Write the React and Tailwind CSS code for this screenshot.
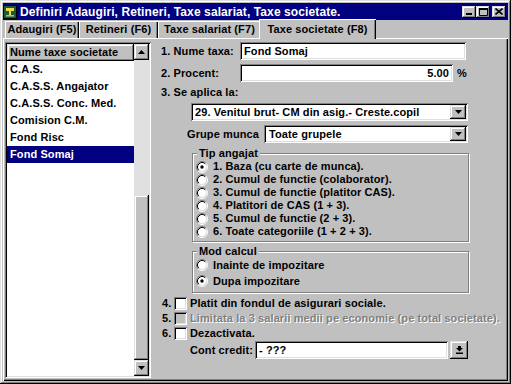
import React from 'react';

// Win95-style bevels
const raised = 'shadow-[inset_-1px_-1px_0_#000,inset_1px_1px_0_#dfdfdf,inset_-2px_-2px_0_#808080,inset_2px_2px_0_#fff]';
const sunken = 'shadow-[inset_1px_1px_0_#808080,inset_-1px_-1px_0_#fff,inset_2px_2px_0_#000,inset_-2px_-2px_0_#dfdfdf]';

const items = ['C.A.S.', 'C.A.S.S. Angajator', 'C.A.S.S. Conc. Med.', 'Comision C.M.', 'Fond Risc', 'Fond Somaj'];

const tipuri = [
    '1. Baza (cu carte de munca).',
    '2. Cumul de functie (colaborator).',
    '3. Cumul de functie (platitor CAS).',
    '4. Platitori de CAS (1 + 3).',
    '5. Cumul de functie (2 + 3).',
    '6. Toate categoriile (1 + 2 + 3).',
];

function AppIcon() {
    return (
        <svg width="14" height="14" viewBox="0 0 14 14">
            <rect x="0.5" y="0.5" width="13" height="13" fill="#1d5b2a" stroke="#000" />
            <rect x="3" y="3" width="8" height="3" fill="#e8d84a" />
            <rect x="6" y="6" width="2" height="5" fill="#e8d84a" />
            <rect x="3" y="10" width="8" height="1.5" fill="#9fc79f" />
        </svg>
    );
}

function TitleBtn({ kind, className = '' }) {
    return (
        <div className={`w-[14px] h-[12px] bg-[#c0c0c0] ${raised} flex items-center justify-center ${className}`}>
            {kind === 'min' && (
                <svg width="8" height="8" viewBox="0 0 8 8"><rect x="1" y="5" width="6" height="2" fill="#000" /></svg>
            )}
            {kind === 'max' && (
                <svg width="9" height="8" viewBox="0 0 9 8"><path d="M0.5 0.5h8v7h-8z" fill="none" stroke="#000" /><rect x="0" y="0" width="9" height="2" fill="#000" /></svg>
            )}
            {kind === 'close' && (
                <svg width="8" height="7" viewBox="0 0 8 7"><path d="M0.5 0.5l7 6M7.5 0.5l-7 6" stroke="#000" strokeWidth="1.6" /></svg>
            )}
        </div>
    );
}

function Tab({ w, active, children }) {
    return (
        <div
            className={`${w} flex items-center justify-center bg-[#c0c0c0] shadow-[inset_1px_1px_0_#fff,inset_-1px_0_0_#000,inset_-2px_0_0_#808080] ${
                active ? 'h-[20px] mb-[-1px] -ml-[2px] relative z-10' : 'h-[17px]'
            }`}
        >
            {children}
        </div>
    );
}

function Tri({ up }) {
    return (
        <svg width="7" height="4" viewBox="0 0 7 4">
            {up ? <path d="M3.5 0L7 4H0z" fill="#000" /> : <path d="M0 0h7L3.5 4z" fill="#000" />}
        </svg>
    );
}

function DropBtn() {
    return (
        <div className={`w-[16px] h-full bg-[#c0c0c0] ${raised} flex items-center justify-center`}>
            <Tri />
        </div>
    );
}

function Select({ text, className, pl }) {
    return (
        <div className={`h-[18px] bg-white ${sunken} p-[2px] flex shrink-0 ${className}`}>
            <div className={`flex-1 flex items-center ${pl}`}>{text}</div>
            <DropBtn />
        </div>
    );
}

function Radio({ checked }) {
    return (
        <svg width="12" height="12" viewBox="0 0 12 12" className="shrink-0">
            <circle cx="6" cy="6" r="4.5" fill="#fff" />
            <path d="M2.11 9.89A5.5 5.5 0 0 1 9.89 2.11" fill="none" stroke="#808080" />
            <path d="M2.82 9.18A4.5 4.5 0 0 1 9.18 2.82" fill="none" stroke="#000" />
            <path d="M9.89 2.11A5.5 5.5 0 0 1 2.11 9.89" fill="none" stroke="#fff" />
            <path d="M9.18 2.82A4.5 4.5 0 0 1 2.82 9.18" fill="none" stroke="#dfdfdf" />
            {checked && <circle cx="6" cy="6" r="1.7" fill="#000" />}
        </svg>
    );
}

function Check({ disabled }) {
    return <div className={`w-[13px] h-[13px] shrink-0 ${disabled ? 'bg-[#c0c0c0]' : 'bg-white'} ${sunken}`} />;
}

function Group({ title, className, children }) {
    return (
        <div className={`relative border border-[#808080] shadow-[inset_1px_1px_0_#fff,1px_1px_0_#fff] ${className}`}>
            <span className="absolute -top-[6px] left-[4px] px-[2px] bg-[#c0c0c0]">{title}</span>
            {children}
        </div>
    );
}

function ListBox() {
    return (
        <div className={`ml-[2px] mt-[4px] w-[146px] h-[336px] shrink-0 p-[2px] bg-white ${sunken} flex`}>
            <div className="flex-1 flex flex-col">
                <div className={`h-[17px] bg-[#c0c0c0] ${raised} flex items-center pl-[3px]`}>Nume taxe societate</div>
                {items.map(name => (
                    <div
                        key={name}
                        className={`h-[17px] flex items-center pl-[3px] ${name === 'Fond Somaj' ? 'bg-[#000080] text-white' : ''}`}
                    >
                        {name}
                    </div>
                ))}
            </div>
            <div className="w-[15px] flex flex-col">
                <div className={`h-[16px] bg-[#c0c0c0] ${raised} flex items-center justify-center`}>
                    <Tri up />
                </div>
                <div className="h-[135px] bg-[#e0e0e0]" />
                <div className={`flex-1 bg-[#c0c0c0] ${raised}`} />
                <div className={`h-[16px] bg-[#c0c0c0] ${raised} flex items-center justify-center`}>
                    <Tri />
                </div>
            </div>
        </div>
    );
}

function Form() {
    return (
        <div className="flex flex-col">
            <div className="mt-[4px] h-[18px] flex items-center">
                <div className="pl-[10px] w-[89px] shrink-0">1. Nume taxa:</div>
                <div className={`w-[226px] h-full shrink-0 bg-white ${sunken} flex items-center pl-[4px]`}>Fond Somaj</div>
            </div>
            <div className="mt-[4px] h-[18px] flex items-center">
                <div className="pl-[10px] w-[89px] shrink-0">2. Procent:</div>
                <div className={`w-[213px] h-full shrink-0 bg-white ${sunken} flex items-center justify-end pr-[4px]`}>5.00</div>
                <span className="ml-[4px]">%</span>
            </div>
            <div className="mt-[3px] h-[14px] flex items-center pl-[10px]">3. Se aplica la:</div>
            <Select className="mt-[4px] ml-[40px] w-[277px]" pl="pl-[2px]" text="29. Venitul brut- CM din asig.- Creste.copil" />
            <div className="mt-[4px] h-[18px] flex items-center">
                <div className="ml-[36px] w-[77px] shrink-0">Grupe munca</div>
                <Select className="w-[204px]" pl="pl-[3px]" text="Toate grupele" />
            </div>

            <Group title="Tip angajat" className="mt-[10px] ml-[41px] w-[277px] pt-[6px] pb-[3px] pl-[3px]">
                {tipuri.map((t, i) => (
                    <div key={t} className="h-[13px] flex items-center gap-[5px]">
                        <Radio checked={i === 0} />
                        <span>{t}</span>
                    </div>
                ))}
            </Group>

            <Group title="Mod calcul" className="mt-[9px] ml-[41px] w-[277px] pt-[5px] pb-[3px] pl-[3px]">
                <div className="h-[16px] flex items-center gap-[5px]">
                    <Radio />
                    <span>Inainte de impozitare</span>
                </div>
                <div className="h-[16px] flex items-center gap-[5px]">
                    <Radio checked />
                    <span>Dupa impozitare</span>
                </div>
            </Group>

            <div className="mt-[3px] h-[15px] flex items-center pl-[11px]">
                <span className="w-[12px] shrink-0">4.</span>
                <Check />
                <span className="ml-[3px]">Platit din fondul de asigurari sociale.</span>
            </div>
            <div className="h-[15px] flex items-center pl-[11px]">
                <span className="w-[12px] shrink-0">5.</span>
                <Check disabled />
                <span className="ml-[3px] text-[#808080] [text-shadow:1px_1px_0_#fff]">
                    Limitata la 3 salarii medii pe economie (pe total societate).
                </span>
            </div>
            <div className="h-[15px] flex items-center pl-[11px]">
                <span className="w-[12px] shrink-0">6.</span>
                <Check />
                <span className="ml-[3px]">Dezactivata.</span>
            </div>
            <div className="h-[18px] flex items-center">
                <div className="ml-[39px] w-[65px] shrink-0">Cont credit:</div>
                <div className={`w-[193px] h-full shrink-0 bg-white ${sunken} flex items-center pl-[4px]`}>- ???</div>
                <div className={`ml-[2px] w-[18px] h-full shrink-0 bg-[#c0c0c0] ${raised} flex items-center justify-center`}>
                    <svg width="7" height="8" viewBox="0 0 7 8">
                        <rect x="2" y="0" width="3" height="2" fill="#000" />
                        <path d="M0 2h7L3.5 5.5z" fill="#000" />
                        <rect x="0" y="6.5" width="7" height="1.5" fill="#000" />
                    </svg>
                </div>
            </div>
        </div>
    );
}

export default function App() {
    return (
        <div
            className={`w-[511px] h-[384px] bg-[#c0c0c0] p-[3px] flex flex-col whitespace-nowrap font-['Liberation_Sans',Arial,sans-serif] text-[11px] tracking-[0.1px] font-bold text-black leading-none shadow-[inset_-1px_-1px_0_#000,inset_1px_1px_0_#dfdfdf,inset_-2px_-2px_0_#808080,inset_2px_2px_0_#fff]`}
        >
            {/* title bar */}
            <div className="h-[17px] shrink-0 bg-[#000080] flex items-center pr-[2px]">
                <AppIcon />
                <span className="ml-[3px] text-white text-[12px]">Definiri Adaugiri, Retineri, Taxe salariat, Taxe societate.</span>
                <div className="ml-auto flex items-center">
                    <TitleBtn kind="min" />
                    <TitleBtn kind="max" />
                    <TitleBtn kind="close" className="ml-[2px]" />
                </div>
            </div>

            {/* tabs */}
            <div className="h-[18px] shrink-0 flex items-end pl-[2px]">
                <Tab w="w-[74px]">Adaugiri (F5)</Tab>
                <Tab w="w-[79px]">Retineri (F6)</Tab>
                <Tab w="w-[103px]">Taxe salariat (F7)</Tab>
                <Tab w="w-[117px]" active>Taxe societate (F8)</Tab>
            </div>

            {/* tab page */}
            <div className="flex-1 flex bg-[#c0c0c0] shadow-[inset_1px_1px_0_#fff,inset_-1px_-1px_0_#000,inset_-2px_-2px_0_#808080]">
                <ListBox />
                <Form />
            </div>
        </div>
    );
}
